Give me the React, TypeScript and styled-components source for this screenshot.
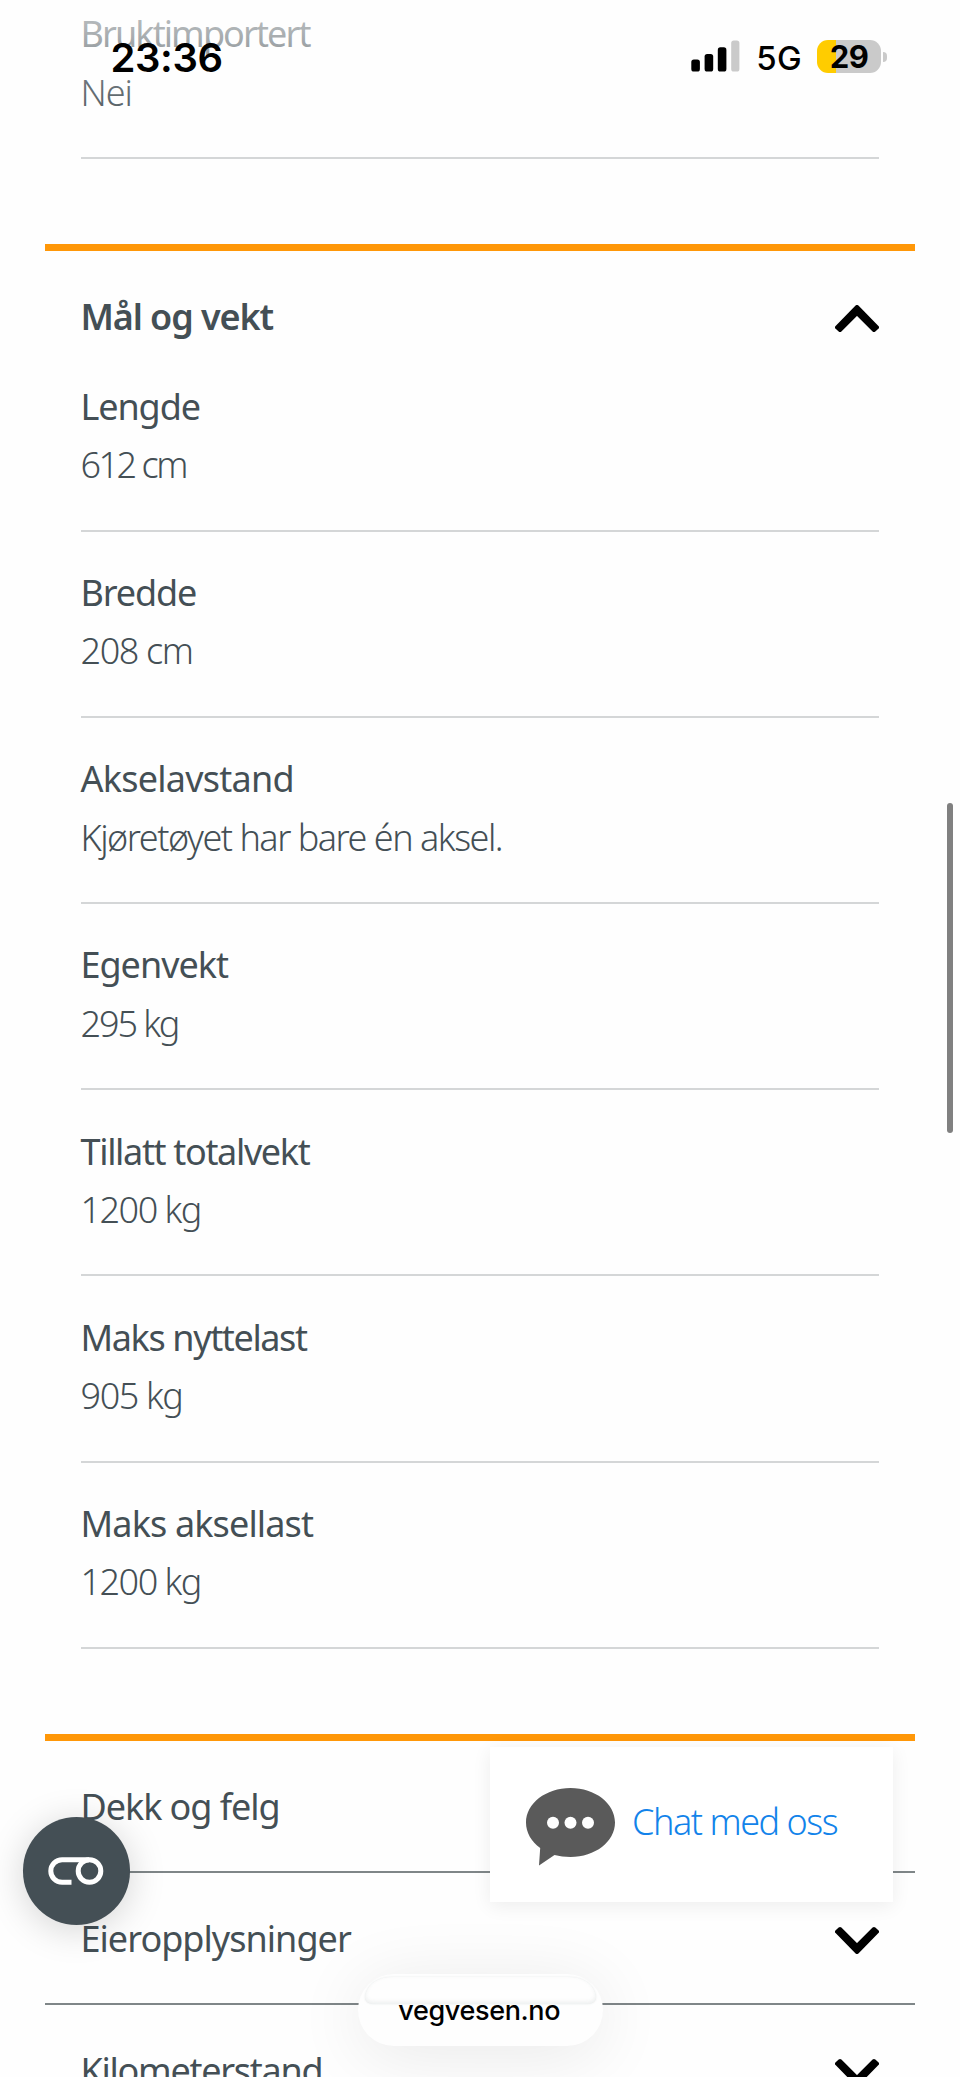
import React from 'react';
import styled, { createGlobalStyle } from 'styled-components';

const GlobalStyle = createGlobalStyle`
  *, *::before, *::after { box-sizing: border-box; }
  body { margin: 0; background: #fefefe; }
`;

const ink = '#444f55';

const Screen = styled.main`
  position: relative;
  width: 960px;
  height: 2077px;
  overflow: hidden;
  background: #fefefe;
  color: ${ink};
  font-family: 'Noto Sans', 'Open Sans', sans-serif;
  font-size: 36px;
  line-height: 58.5px;
`;

const Content = styled.div`
  display: flex;
  flex-direction: column;
  margin-top: -27px;
  padding: 0 45px;
`;

const Section = styled.section<{ $ruled?: boolean }>`
  display: flex;
  flex-direction: column;
  flex-shrink: 0;
  border-top: ${(p) => (p.$ruled ? '7px solid #ff9708' : '0')};
`;

const List = styled.dl`
  margin: 0;
  padding: 0 36px 85.2px;
`;

const Item = styled.div`
  height: 186.2px;
  padding-top: 32.4px;
  border-bottom: 2px solid #d4d6d7;
`;

const Label = styled.dt<{ $spacing: number }>`
  margin-left: -0.5px;
  white-space: nowrap;
  letter-spacing: ${(p) => p.$spacing}px;
`;

const Value = styled.dd<{ $spacing: number }>`
  margin: 0 0 0 -0.5px;
  font-weight: 300;
  white-space: nowrap;
  letter-spacing: ${(p) => p.$spacing}px;
`;

const AccordionHeader = styled.button<{ $open?: boolean }>`
  display: flex;
  align-items: flex-start;
  justify-content: space-between;
  width: 100%;
  height: ${(p) => (p.$open ? '94px' : '132.3px')};
  padding: 37px 36px 0 35.5px;
  border: 0;
  border-bottom: ${(p) => (p.$open ? '0' : '2px solid #7f8688')};
  background: none;
  color: inherit;
  font: inherit;
  font-weight: ${(p) => (p.$open ? 600 : 400)};
  text-align: left;
`;

const Title = styled.span<{ $spacing: number }>`
  white-space: nowrap;
  letter-spacing: ${(p) => p.$spacing}px;
`;

const ChevronIcon = styled.svg<{ $up?: boolean }>`
  width: 44px;
  height: 28px;
  margin-top: ${(p) => (p.$up ? '17px' : '16px')};
  transform: ${(p) => (p.$up ? 'none' : 'rotate(180deg)')};
`;

const Chevron = ({ up }: { up?: boolean }) => (
  <ChevronIcon $up={up} viewBox="0 0 44 28" aria-hidden>
    <path d="M22 2 2 22.3 5 25 22 8.2 39 25 42 22.3Z" stroke="#000" strokeWidth="4" strokeLinejoin="round" />
  </ChevronIcon>
);

const TopFade = styled.div`
  position: absolute;
  inset: 0 0 auto;
  height: 150px;
  background: linear-gradient(
    rgba(254, 254, 254, 0.68) 0,
    rgba(254, 254, 254, 0.56) 32px,
    rgba(254, 254, 254, 0.46) 50px,
    rgba(254, 254, 254, 0.2) 85px,
    rgba(254, 254, 254, 0) 140px
  );
`;

const StatusBar = styled.header`
  position: absolute;
  inset: 0 0 auto;
  display: flex;
  align-items: center;
  height: 114px;
  padding: 0 73px 0 110.5px;
  color: #000;
  font-family: Inter, 'Liberation Sans', sans-serif;
  line-height: 48px;
`;

const Clock = styled.time`
  margin-right: auto;
  padding-top: 1px;
  font-size: 40px;
  font-weight: 600;
  letter-spacing: -0.39px;
`;

const Signal = styled.svg`
  width: 49px;
  height: 32px;
  margin: 0 16px 2px 0;
`;

const Network = styled.span`
  padding-top: 1px;
  width: 61px;
  font-size: 33px;
  font-weight: 500;
  letter-spacing: 0.3px;
`;

const Battery = styled.div`
  display: flex;
  align-items: center;
  gap: 2.6px;
  margin-bottom: 1px;
  &::after {
    content: '';
    width: 3.6px;
    height: 10px;
    border-radius: 0 5px 5px 0;
    background: #cacaca;
  }
`;

const BatteryBody = styled.div`
  display: flex;
  align-items: center;
  justify-content: center;
  width: 63.6px;
  height: 33px;
  border-radius: 11px;
  background: linear-gradient(90deg, #ffcc00 19px, #cacaca 19px);
  font-size: 31px;
  font-weight: 700;
  letter-spacing: -0.5px;
`;

const ScrollThumb = styled.div`
  position: absolute;
  top: 803px;
  right: 7px;
  width: 6px;
  height: 330px;
  border-radius: 3px;
  background: #808080;
`;

const ChatButton = styled.button`
  position: absolute;
  top: 1747px;
  left: 490px;
  display: flex;
  align-items: flex-start;
  gap: 17px;
  width: 403px;
  height: 155px;
  padding: 41px 0 0 36px;
  border: 0;
  background: #fff;
  box-shadow: 0 4px 18px rgba(0, 0, 0, 0.07);
  color: #1283ea;
  font: inherit;
  font-weight: 300;
  letter-spacing: -1.47px;
  white-space: nowrap;
`;

const ChatLabel = styled.span`
  margin-top: 5px;
`;

const BubbleIcon = styled.svg`
  flex: none;
  width: 89px;
  height: 78px;
`;

const CookieButton = styled.button`
  position: absolute;
  top: 1817px;
  left: 22.5px;
  display: flex;
  align-items: center;
  justify-content: center;
  width: 107.5px;
  height: 107.5px;
  padding: 0;
  border: 0;
  border-radius: 50%;
  background: ${ink};
  box-shadow: 0 5px 36px rgba(0, 0, 0, 0.17);
`;

const AddressPill = styled.div`
  position: absolute;
  top: 1974px;
  left: 357.5px;
  display: flex;
  align-items: center;
  justify-content: center;
  width: 245px;
  height: 72px;
  border-radius: 36px;
  background: #fefefe;
  box-shadow: 0 8px 70px rgba(0, 0, 0, 0.09);
  color: #000;
  font: 500 27px/34px Inter, 'Liberation Sans', sans-serif;
  letter-spacing: -0.37px;
`;

const PillGloss = styled.span`
  position: absolute;
  top: 3px;
  left: 7px;
  right: 7px;
  height: 27px;
  border-radius: 30px 30px 9px 9px / 24px 24px 7px 7px;
  box-shadow: inset 0 -2px 4px rgba(60, 80, 80, 0.09), 0 0 2px rgba(60, 80, 80, 0.12);
`;

const PillText = styled.span`
  position: relative;
  padding: 1px 1.5px 0 0;
`;

type Row = { label: string; labelSpacing: number; value: string; valueSpacing: number };

const importRows: Row[] = [
  { label: 'Bruktimportert', labelSpacing: -1.9, value: 'Nei', valueSpacing: -1.06 },
];

const sizeRows: Row[] = [
  { label: 'Lengde', labelSpacing: -1.1, value: '612 cm', valueSpacing: -2.5 },
  { label: 'Bredde', labelSpacing: -1.13, value: '208 cm', valueSpacing: -1.4 },
  { label: 'Akselavstand', labelSpacing: -0.75, value: 'Kjøretøyet har bare én aksel.', valueSpacing: -1.49 },
  { label: 'Egenvekt', labelSpacing: -1.02, value: '295 kg', valueSpacing: -2.1 },
  { label: 'Tillatt totalvekt', labelSpacing: -1.33, value: '1200 kg', valueSpacing: -1.5 },
  { label: 'Maks nyttelast', labelSpacing: -1.37, value: '905 kg', valueSpacing: -1.4 },
  { label: 'Maks aksellast', labelSpacing: -0.86, value: '1200 kg', valueSpacing: -1.5 },
];

const closedSections = [
  { title: 'Dekk og felg', spacing: -1.06 },
  { title: 'Eieropplysninger', spacing: -0.97 },
  { title: 'Kilometerstand', spacing: -1.27 },
];

const DataList = ({ rows }: { rows: Row[] }) => (
  <List>
    {rows.map((row) => (
      <Item key={row.label}>
        <Label $spacing={row.labelSpacing}>{row.label}</Label>
        <Value $spacing={row.valueSpacing}>{row.value}</Value>
      </Item>
    ))}
  </List>
);

export default function App() {
  return (
    <>
      <GlobalStyle />
      <Screen>
        <Content>
          <Section>
            <DataList rows={importRows} />
          </Section>
          <Section $ruled>
            <AccordionHeader $open>
              <Title $spacing={-1.11}>Mål og vekt</Title>
              <Chevron up />
            </AccordionHeader>
            <DataList rows={sizeRows} />
          </Section>
          <Section $ruled>
            {closedSections.map((s) => (
              <AccordionHeader key={s.title}>
                <Title $spacing={s.spacing}>{s.title}</Title>
                <Chevron />
              </AccordionHeader>
            ))}
          </Section>
        </Content>

        <TopFade />
        <StatusBar>
          <Clock>23:36</Clock>
          <Signal viewBox="0 0 49 32" aria-hidden>
            <rect x="0.3" y="19.5" width="8.6" height="12" rx="2.6" />
            <rect x="13.6" y="14" width="8.6" height="17.5" rx="2.6" />
            <rect x="26.8" y="7.3" width="8.6" height="24.2" rx="2.6" />
            <rect x="40.2" y="0.5" width="8.2" height="31" rx="2.6" fill="#cacaca" />
          </Signal>
          <Network>5G</Network>
          <Battery>
            <BatteryBody>29</BatteryBody>
          </Battery>
        </StatusBar>

        <ScrollThumb />

        <CookieButton aria-label="Cookies">
          <svg width="56" height="28" viewBox="0 0 56 28" fill="none" stroke="#fff" strokeWidth="5">
            <path d="M24 25.3H14.6A11.3 11.3 0 0 1 14.6 2.7H41.5" transform="translate(-0.5 0)" />
            <circle cx="41.5" cy="14" r="11.3" />
          </svg>
        </CookieButton>

        <ChatButton>
          <BubbleIcon viewBox="0 0 89 78" aria-hidden>
            <path
              d="M44.5 0C69.1 0 89 15.4 89 34.5S69.1 69 44.5 69C38.9 69 33.4 68.3 28.5 67L13 77.5 14.2 60C5.4 53.7 0 44.6 0 34.5 0 15.4 19.9 0 44.5 0Z"
              fill="#5a5a5a"
            />
            <g fill="#fff">
              <circle cx="27" cy="34.7" r="6" />
              <circle cx="44.5" cy="34.7" r="6" />
              <circle cx="62" cy="34.7" r="6" />
            </g>
          </BubbleIcon>
          <ChatLabel>Chat med oss</ChatLabel>
        </ChatButton>

        <AddressPill>
          <PillGloss />
          <PillText>vegvesen.no</PillText>
        </AddressPill>
      </Screen>
    </>
  );
}
